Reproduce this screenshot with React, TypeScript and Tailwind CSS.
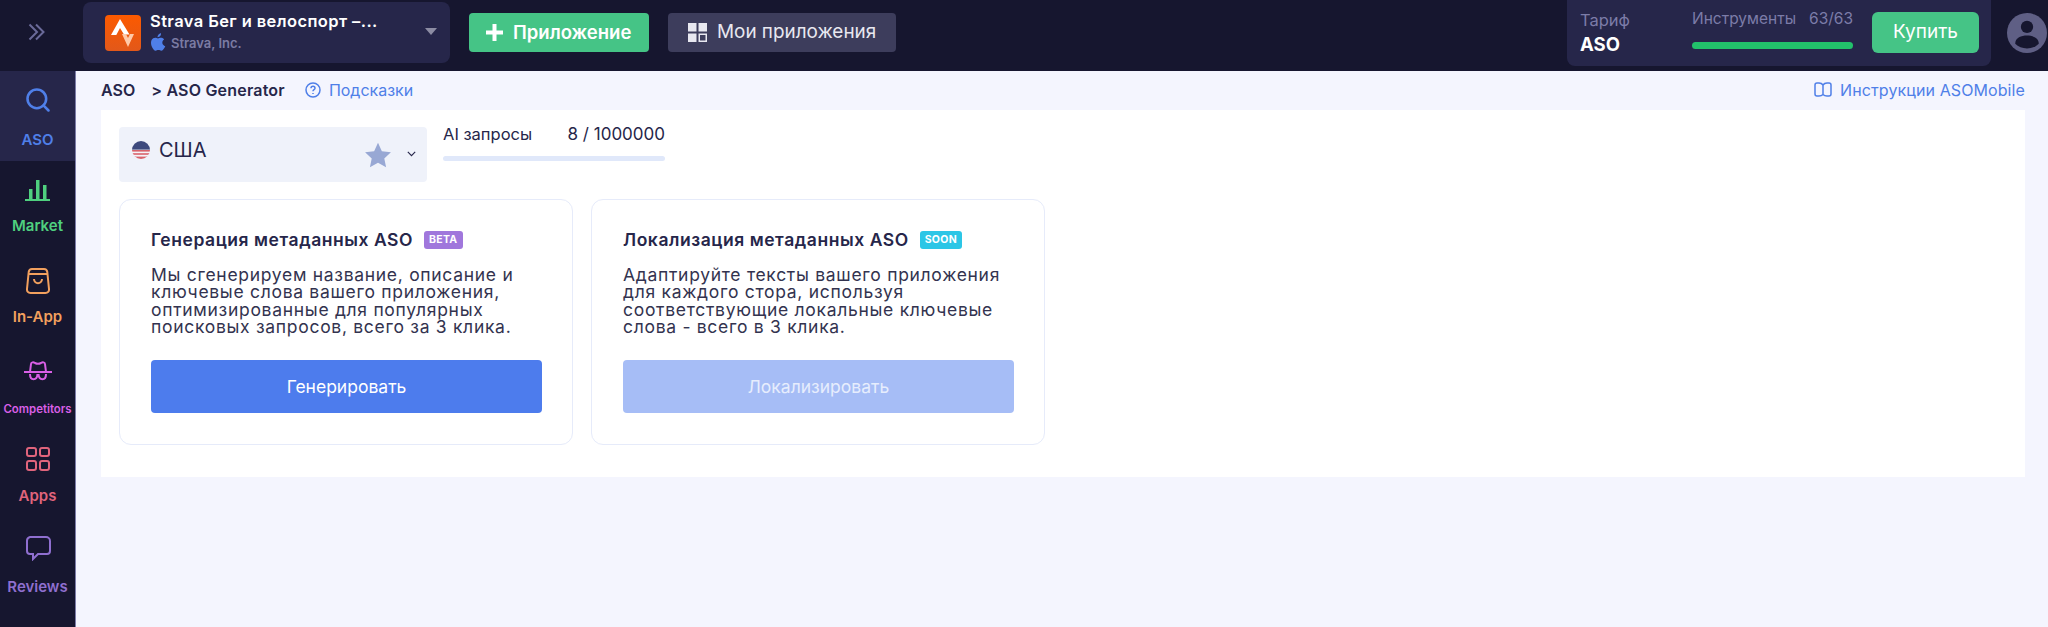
import { Search } from "lucide-react";

const font = { fontFamily: "Inter, 'Noto Sans', sans-serif" };

function SideItem({ label, icon, color, active, small, iconTop, labelTop }: { label: string; icon: React.ReactNode; color: string; active?: boolean; small?: boolean; iconTop: string; labelTop: string }) {
  return (
    <div className={`flex h-[90px] flex-col items-center ${active ? "bg-[#26264a]" : ""} ${color}`}>
      <div className={`flex h-[30px] items-center justify-center ${iconTop}`}>{icon}</div>
      <div className={`font-semibold leading-none ${labelTop} ${small ? "text-[11.4px]" : "text-[15px]"}`}>{label}</div>
    </div>
  );
}

function UsaFlag() {
  return (
    <svg width="18" height="18" viewBox="0 0 18 18">
      <clipPath id="flag"><circle cx="9" cy="9" r="9" /></clipPath>
      <g clipPath="url(#flag)">
        <rect width="18" height="18" fill="#f4f4f8" />
        <rect y="9" width="18" height="1.6" fill="#d9636b" />
        <rect y="12.2" width="18" height="1.6" fill="#d9636b" />
        <rect y="15.6" width="18" height="2.4" fill="#d9636b" />
        <rect width="18" height="8.6" fill="#3d4a7d" />
      </g>
    </svg>
  );
}

function Card({ title, badge, badgeColor, text, action, buttonColor, textColor }: { title: string; badge: string; badgeColor: string; text: string[]; action: string; buttonColor: string; textColor: string }) {
  return (
    <div className="h-[246px] w-[454px] rounded-xl border border-[#e6ebfa] px-[31px] pt-[29px]">
      <div className="flex h-[22px] items-center">
        <h2 className="text-[17.5px] leading-none font-semibold tracking-[0.55px] whitespace-nowrap text-[#26264a]">{title}</h2>
        <span className={`ml-[11px] flex h-[18px] items-center rounded-[3px] px-[5px] text-[10.5px] font-bold tracking-[0.3px] text-white ${badgeColor}`}>{badge}</span>
      </div>
      <div className="mt-[15px] text-[17.5px] leading-[17.3px] tracking-[0.7px] text-[#33334f]">
        {text.map((line) => (
          <div key={line} className="whitespace-nowrap">{line}</div>
        ))}
      </div>
      <button type="button" className={`mt-[25px] h-[53px] w-[391px] rounded text-[17.5px] ${buttonColor} ${textColor}`}>{action}</button>
    </div>
  );
}

export default function App() {
  return (
    <div className="flex h-[627px] flex-col overflow-hidden bg-[#f4f5fe]" style={font}>
      <header className="flex h-[71px] shrink-0 bg-[#16162f]">
        <div className="flex w-[83px] items-center justify-center pr-[11px] pb-[7px] text-[#6a6a99]">
          <svg width="17" height="18" viewBox="0 0 17 18" fill="none" stroke="currentColor" strokeWidth="2"><path d="M1.500 1.500l7.500 7.500-7.500 7.500M8 1.500l7.500 7.500-7.500 7.500" /></svg>
        </div>
        <div className="mt-[2px] flex h-[61px] w-[367px] items-center rounded-lg bg-[#26264a] pr-[13px] pl-[22px]">
          <svg width="36" height="36" viewBox="0 0 36 36" className="shrink-0">
            <defs><linearGradient id="st" x1="0" y1="0" x2="0" y2="1"><stop offset="0" stopColor="#fc5a00" /><stop offset="1" stopColor="#e2581a" /></linearGradient></defs>
            <rect width="36" height="36" rx="4" fill="url(#st)" />
            <path d="M15 4l9.500 15.500h-5.500L15 13l-3.700 7H6z" fill="#fff" />
            <path d="M17 19h4l2 4 2-4h4L23 32z" fill="#ffc9a8" />
          </svg>
          <div className="ml-[9px] flex-1">
            <div className="text-[16.5px] leading-[20px] font-semibold tracking-[0.4px] whitespace-nowrap text-white">Strava Бег и велоспорт –...</div>
            <div className="mt-[3px] flex h-[20px] items-center gap-[5px]">
              <svg width="16" height="18" viewBox="1.500 0.500 13 15" fill="#4f7fe8" className="-mt-[4px]"><path d="M11.600 8.500c0-1.700 1.400-2.500 1.500-2.600-.8-1.200-2.100-1.300-2.500-1.400-1.100-.1-2.100.6-2.600.6-.6 0-1.400-.6-2.300-.6C4.500 4.500 3.400 5.200 2.800 6.200c-1.300 2.200-.3 5.500.9 7.300.6.900 1.300 1.900 2.300 1.800.9 0 1.300-.6 2.400-.6s1.400.6 2.400.6 1.600-.9 2.200-1.800c.7-1 1-2 1-2-.1 0-2.400-.9-2.400-3zM9.800 3.100c.5-.6.800-1.400.7-2.300-.7 0-1.600.5-2.100 1.100-.5.5-.9 1.400-.8 2.200.8.100 1.600-.4 2.200-1z" /></svg>
              <span className="text-[13px] font-semibold text-[#7b7ba3]">Strava, Inc.</span>
            </div>
          </div>
          <div className="mb-[3px] h-0 w-0 border-x-[6.5px] border-t-[7px] border-x-transparent border-t-[#8c8ca3]" />
        </div>
        <div className="mt-[13px] ml-[19px] flex h-[39px] w-[180px] items-center rounded bg-[#45c486] pl-[16px] text-white">
          <svg width="19" height="19" viewBox="0 0 19 19" fill="#fff"><rect x="7.500" y="1" width="4" height="17" /><rect x="1" y="7.500" width="17" height="4" /></svg>
          <span className="ml-[9px] text-[18.5px] font-semibold">Приложение</span>
        </div>
        <div className="mt-[13px] ml-[19px] flex h-[39px] w-[228px] items-center rounded bg-[#3d3d5c] pl-[20px] text-[#e8e8f0]">
          <svg width="19" height="19" viewBox="0 0 19 19" fill="#e8e8f0">
            <rect width="8.500" height="8.500" /><rect x="10.500" width="8.500" height="8.500" /><rect y="10.500" width="8.500" height="8.500" />
            <rect x="11.250" y="11.250" width="7" height="7" fill="none" stroke="#e8e8f0" strokeWidth="1.500" />
          </svg>
          <span className="ml-[10px] text-[18.900px]">Мои приложения</span>
        </div>
        <div className="mr-[1px] ml-auto flex">
          <div className="flex h-[66px] w-[424px] rounded-b-lg bg-[#26264a]">
            <div className="w-[125px] pt-[10px] pl-[13px]">
              <div className="text-[16.5px] leading-[20px] text-[#7c7ca8]">Тариф</div>
              <div className="mt-[4px] text-[18.5px] leading-[20px] font-bold text-white">ASO</div>
            </div>
            <div className="w-[161px] pt-[9px]">
              <div className="flex justify-between text-[15.5px] leading-[20px] text-[#7c7ca8]"><span>Инструменты</span><span>63/63</span></div>
              <div className="mt-[13px] h-[7px] rounded-full bg-[#22c16b]" />
            </div>
            <button type="button" className="mt-[12px] ml-[19px] h-[41px] w-[107px] rounded-md bg-[#45c486] text-[19px] text-white">Купить</button>
          </div>
          <svg width="40" height="40" viewBox="0 0 39 39" className="mt-[13px] ml-[16px]">
            <circle cx="19.500" cy="19.500" r="19.500" fill="#5f5f85" />
            <circle cx="19.500" cy="13.500" r="6" fill="#16162f" />
            <path d="M8 30c0-6 6-8 11.500-8S31 24 31 30c-3 3-7 4.500-11.500 4.500S11 33 8 30z" fill="#16162f" />
          </svg>
        </div>
      </header>

      <div className="flex flex-1">
        <aside className="w-[76px] shrink-0 border-r border-[#7c7ca8] bg-[#16162f]">
          <SideItem active label="ASO" color="text-[#4f7fe8]" iconTop="mt-[14px]" labelTop="mt-[17px]" icon={<Search size={28} strokeWidth={2.200} />} />
          <SideItem label="Market" color="text-[#4fd07f]" iconTop="mt-[14px]" labelTop="mt-[13px]" icon={
            <svg width="26" height="24" viewBox="0 0 26 24" fill="currentColor"><rect x="0" y="21" width="25" height="2" /><rect x="4" y="11" width="3.500" height="10" /><rect x="11" y="2" width="3.500" height="19" /><rect x="18" y="7" width="3.500" height="14" /></svg>
          } />
          <SideItem label="In-App" color="text-[#f2a05e]" iconTop="mt-[15px]" labelTop="mt-[13px]" icon={
            <svg width="24" height="26" viewBox="0 0 24 26" fill="none" stroke="currentColor" strokeWidth="2"><path d="M6 1h12c2 0 3 1 3.300 3L23 21c.2 2.400-1.200 4-3.500 4h-15C2.200 25 .8 23.400 1 21L2.700 4C3 2 4 1 6 1zM2.500 6h19M8 11c0 5.500 8 5.500 8 0" /></svg>
          } />
          <SideItem small label="Competitors" color="text-[#d95fe6]" iconTop="mt-[15px]" labelTop="mt-[18px]" icon={
            <svg width="28" height="20" viewBox="0 0 28 20" fill="none" stroke="currentColor" strokeWidth="2"><path d="M0 11h28M6 11l1-8c.2-2 2.500-2 4-1 2 1 4 1 6 0 1.500-1 3.800-1 4 1l1 8" /><path d="M6 13c0 7 7 7 7.500 0M14.500 13c.5 7 7.500 7 7.500 0" /></svg>
          } />
          <SideItem label="Apps" color="text-[#e0647c]" iconTop="mt-[13px]" labelTop="mt-[14px]" icon={
            <svg width="24" height="24" viewBox="0 0 24 24" fill="none" stroke="currentColor" strokeWidth="2"><rect x="1" y="1" width="9" height="8" rx="2" /><rect x="14" y="1" width="9" height="8" rx="2" /><rect x="1" y="14" width="9" height="9" rx="2" /><rect x="14" y="14" width="9" height="9" rx="2" /></svg>
          } />
          <SideItem label="Reviews" color="text-[#8f6fd0]" iconTop="mt-[12px]" labelTop="mt-[16px]" icon={
            <svg width="26" height="25" viewBox="0 0 26 25" fill="none" stroke="currentColor" strokeWidth="2"><path d="M5 1h16a4 4 0 0 1 4 4v10a3 3 0 0 1-3 3H13l-5 5v-5H5a3 3 0 0 1-3-3V5a4 4 0 0 1 3-4z" /></svg>
          } />
        </aside>

        <main className="min-w-0 flex-1 pl-[25px]">
          <div className="flex h-[38px] items-center pr-[23px] text-[16px]">
            <span className="font-semibold text-[#26264a]">ASO</span>
            <span className="ml-[16px] font-semibold tracking-[0.2px] text-[#26264a]">&gt; ASO Generator</span>
            <svg width="16" height="16" viewBox="0 0 16 16" fill="none" stroke="#4f7fe8" strokeWidth="1.500" className="ml-[20px]"><circle cx="8" cy="8" r="7" /><path d="M6 6.200c0-2.600 4-2.600 4 0 0 1.500-2 1.500-2 3M8 11v1" /></svg>
            <span className="ml-[8px] text-[#4f7fe8]">Подсказки</span>
            <svg width="18" height="16" viewBox="0 0 18 16" fill="none" stroke="#4f7fe8" strokeWidth="1.500" className="ml-auto"><path d="M9 3c-1-1.500-2.500-2-4-2H3a2 2 0 0 0-2 2v9a2 2 0 0 0 2 2h2c1.500 0 3-.5 4-1.500 1 1 2.500 1.500 4 1.500h2a2 2 0 0 0 2-2V3a2 2 0 0 0-2-2h-2c-1.500 0-3 .5-4 2zM9 3v9.500" /></svg>
            <span className="ml-[8px] tracking-[0.1px] text-[#4f7fe8]">Инструкции ASOMobile</span>
          </div>
          <div className="mt-[1px] mr-[23px] h-[367px] bg-white pt-[17px] pl-[18px]">
            <div className="flex">
              <div className="flex h-[55px] w-[308px] rounded bg-[#eff2fa] pl-[13px]">
                <div className="mt-[14px] flex h-[18px] items-center">
                  <UsaFlag />
                  <span className="ml-[9px] text-[20px] text-[#26264a]">США</span>
                </div>
                <svg width="30" height="29" viewBox="0 0 24 24" fill="#98a8d4" className="mt-[14px] ml-auto"><path d="M12 1.500l3.200 6.900 7.500.9-5.500 5.100 1.500 7.400L12 18.100l-6.700 3.700 1.500-7.400L1.300 9.300l7.500-.9z" /></svg>
                <svg width="9" height="6" viewBox="0 0 11 7" fill="none" stroke="#26264a" strokeWidth="1.400" className="mt-[24px] mr-[11px] ml-[14px]"><path d="M1 1l4.500 4.500L10 1" /></svg>
              </div>
              <div className="ml-[16px] w-[222px]">
                <div className="-mt-[3px] flex justify-between text-[16.5px] leading-[20px] text-[#26264a]"><span>AI запросы</span><span className="text-[17px]">8 / 1000000</span></div>
                <div className="mt-[12px] h-[5px] rounded-full bg-[#e0e8fa]" />
              </div>
            </div>
            <div className="mt-[17px] flex gap-[18px]">
              <Card title="Генерация метаданных ASO" badge="BETA" badgeColor="bg-[#a077dc]" action="Генерировать" buttonColor="bg-[#4d7ced]" textColor="text-white"
                text={["Мы сгенерируем название, описание и", "ключевые слова вашего приложения,", "оптимизированные для популярных", "поисковых запросов, всего за 3 клика."]} />
              <Card title="Локализация метаданных ASO" badge="SOON" badgeColor="bg-[#2cc6e6]" action="Локализировать" buttonColor="bg-[#a6bdf6]" textColor="text-[#e6edfd]"
                text={["Адаптируйте тексты вашего приложения", "для каждого стора, используя", "соответствующие локальные ключевые", "слова - всего в 3 клика."]} />
            </div>
          </div>
        </main>
      </div>
    </div>
  );
}
